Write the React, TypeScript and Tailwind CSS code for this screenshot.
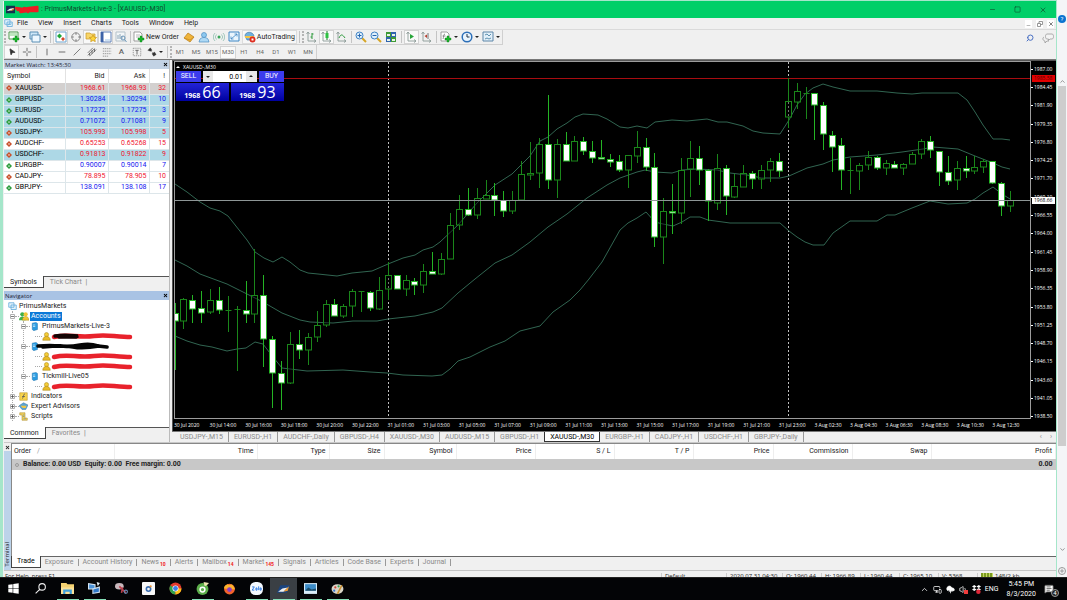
import React from 'react';
import {
  ChevronDown,
  ChevronUp,
  CloudUpload,
  Crosshair,
  Minus,
  MessageSquareText,
  MonitorSmartphone,
  MousePointer2,
  Plus,
  Search,
  Square,
  Volume1,
  X,
} from 'lucide-react';

interface Quote {
  symbol: string;
  bid: string;
  ask: string;
  spread: number;
  up: boolean;
  row: string;
}

const SEL = 'bg-[#add8e6]';
const QUOTES: Quote[] = [
  { symbol: 'XAUUSD-', bid: '1968.61', ask: '1968.93', spread: 32, up: false, row: 'bg-[#d3d0cf]' },
  { symbol: 'GBPUSD-', bid: '1.30284', ask: '1.30294', spread: 10, up: true, row: SEL },
  { symbol: 'EURUSD-', bid: '1.17272', ask: '1.17275', spread: 3, up: true, row: SEL },
  { symbol: 'AUDUSD-', bid: '0.71072', ask: '0.71081', spread: 9, up: true, row: SEL },
  { symbol: 'USDJPY-', bid: '105.993', ask: '105.998', spread: 5, up: false, row: SEL },
  { symbol: 'AUDCHF-', bid: '0.65253', ask: '0.65268', spread: 15, up: false, row: 'bg-white' },
  { symbol: 'USDCHF-', bid: '0.91813', ask: '0.91822', spread: 9, up: false, row: SEL },
  { symbol: 'EURGBP-', bid: '0.90007', ask: '0.90014', spread: 7, up: true, row: 'bg-white' },
  { symbol: 'CADJPY-', bid: '78.895', ask: '78.905', spread: 10, up: false, row: 'bg-white' },
  { symbol: 'GBPJPY-', bid: '138.091', ask: '138.108', spread: 17, up: true, row: 'bg-white' },
];

const MENU = ['File', 'View', 'Insert', 'Charts', 'Tools', 'Window', 'Help'];
const PERIODS = ['M1', 'M5', 'M15', 'M30', 'H1', 'H4', 'D1', 'W1', 'MN'];
const CHART_TABS = [
  'USDJPY-,M15', 'EURUSD-,H1', 'AUDCHF-,Daily', 'GBPUSD-,H4', 'XAUUSD-,M30', 'AUDUSD-,M15',
  'GBPUSD-,H1', 'XAUUSD-,M30', 'EURGBP-,H1', 'CADJPY-,H1', 'USDCHF-,H1', 'GBPJPY-,Daily',
];
const ACTIVE_CHART = 7;
const PRICES = [
  '1987.00', '1984.45', '1981.90', '1979.35', '1976.80', '1974.25', '1971.70', '1969.10', '1966.55', '1964.00',
  '1961.45', '1958.90', '1956.35', '1953.80', '1951.25', '1948.70', '1946.15', '1943.60', '1941.05', '1938.50',
];
const TIMES = [
  '30 Jul 2020', '30 Jul 14:00', '30 Jul 16:00', '30 Jul 18:00', '30 Jul 20:00', '30 Jul 22:00',
  '31 Jul 01:00', '31 Jul 03:00', '31 Jul 05:00', '31 Jul 07:00', '31 Jul 09:00', '31 Jul 11:00',
  '31 Jul 13:00', '31 Jul 15:00', '31 Jul 17:00', '31 Jul 19:00', '31 Jul 21:00', '31 Jul 23:00',
  '3 Aug 02:30', '3 Aug 04:30', '3 Aug 06:30', '3 Aug 08:30', '3 Aug 10:30', '3 Aug 12:30',
];
const TERMINAL_TABS: { name: string; count?: number }[] = [
  { name: 'Trade' }, { name: 'Exposure' }, { name: 'Account History' }, { name: 'News', count: 10 },
  { name: 'Alerts' }, { name: 'Mailbox', count: 14 }, { name: 'Market', count: 145 }, { name: 'Signals' },
  { name: 'Articles' }, { name: 'Code Base' }, { name: 'Experts' }, { name: 'Journal' },
];
const ORDER_COLS = ['Time', 'Type', 'Size', 'Symbol', 'Price', 'S / L', 'T / P', 'Price', 'Commission', 'Swap', 'Profit'];

// high, body top, body bottom, low, 1 = bearish (filled)
const CANDLES: number[][] = [
  [303, 313, 321, 370, 1], [298, 299, 321, 329, 0], [295, 300, 309, 323, 1], [291, 308, 313, 323, 1],
  [289, 300, 312, 314, 0], [287, 300, 310, 314, 1], [296, 310, 310, 332, 0], [306, 309, 309, 371, 0],
  [281, 310, 314, 323, 1], [249, 295, 314, 323, 0], [275, 295, 339, 367, 1], [336, 339, 373, 408, 1],
  [361, 373, 383, 410, 1], [332, 344, 383, 384, 0], [330, 344, 350, 359, 1], [333, 337, 350, 365, 0],
  [311, 325, 337, 342, 0], [300, 304, 325, 327, 0], [299, 304, 316, 316, 1], [304, 306, 316, 318, 0],
  [289, 291, 306, 317, 0], [291, 291, 291, 312, 0], [291, 292, 308, 311, 1], [277, 290, 309, 310, 0],
  [262, 275, 289, 300, 0], [275, 275, 289, 289, 1], [275, 280, 289, 296, 0], [278, 281, 285, 295, 1],
  [264, 271, 285, 293, 0], [252, 271, 274, 274, 1], [253, 259, 274, 275, 0], [213, 225, 259, 259, 0],
  [195, 209, 225, 230, 0], [188, 209, 215, 216, 1], [188, 198, 215, 219, 0], [180, 195, 199, 199, 0],
  [183, 195, 200, 216, 1], [191, 200, 211, 217, 1], [191, 200, 211, 214, 0], [161, 174, 200, 200, 0],
  [142, 173, 175, 180, 0], [138, 144, 173, 188, 0], [95, 144, 180, 189, 1], [139, 144, 180, 198, 0],
  [132, 144, 161, 161, 1], [136, 141, 161, 161, 0], [137, 141, 151, 155, 1], [141, 151, 158, 163, 1],
  [140, 157, 159, 159, 1], [154, 159, 162, 167, 1], [155, 161, 170, 172, 1], [155, 155, 170, 188, 0],
  [131, 147, 156, 163, 0], [138, 147, 167, 171, 1], [153, 167, 237, 247, 1], [198, 211, 237, 264, 0],
  [184, 211, 213, 234, 1], [158, 170, 213, 224, 0], [141, 158, 169, 197, 0], [146, 158, 170, 185, 1],
  [169, 170, 201, 221, 1], [154, 168, 203, 210, 0], [165, 168, 196, 215, 1], [174, 186, 197, 198, 0],
  [165, 173, 187, 187, 0], [171, 173, 179, 189, 1], [165, 170, 179, 189, 0], [158, 161, 170, 182, 0],
  [153, 161, 171, 177, 1], [78, 101, 117, 128, 0], [83, 91, 102, 109, 0], [87, 93, 93, 119, 0],
  [93, 93, 105, 140, 1], [102, 105, 134, 150, 1], [131, 135, 147, 172, 1], [138, 145, 170, 190, 1],
  [158, 170, 170, 194, 0], [163, 165, 171, 190, 0], [151, 157, 165, 170, 0], [156, 157, 168, 170, 1],
  [160, 163, 168, 175, 0], [161, 164, 168, 168, 1], [163, 164, 168, 175, 0], [152, 154, 164, 164, 0],
  [139, 141, 154, 159, 0], [136, 141, 150, 158, 1], [151, 151, 172, 186, 1], [156, 172, 181, 185, 1],
  [161, 168, 180, 190, 0], [156, 168, 171, 178, 1], [156, 167, 171, 174, 0], [159, 161, 167, 173, 0],
  [161, 161, 183, 184, 1], [182, 183, 206, 216, 1], [191, 200, 206, 212, 0],
];

const BANDS = [
  '175,184 187,192 200,202 210,208 220,211 228,216 247,240 255,252 264,258 273,262 282,257 290,262 300,270 308,273 318,274 337,276 352,273 372,271 388,264 403,258 415,255 423,250 433,247 440,242 458,225 477,203 495,185 512,174 530,156 540,141 548,137 557,129 567,123 575,117 583,114 598,115 607,119 620,127 628,128 637,126 647,128 655,122 672,120 687,121 707,119 718,122 727,122 743,126 753,131 763,133 780,134 789,120 797,105 805,94 813,88 823,84 833,87 850,91 877,91 897,93 912,94 922,93 958,93 967,100 975,112 983,125 993,139 1002,139 1010,140',
  '175,260 187,266 200,274 227,284 253,297 263,302 282,313 300,320 310,322 333,323 353,321 377,321 388,319 415,316 433,312 442,308 458,293 475,279 495,263 512,255 530,242 548,227 567,214 587,198 607,185 620,178 637,172 645,170 655,172 672,173 682,170 697,169 717,170 730,173 747,175 762,178 780,178 789,176 807,168 823,164 833,160 850,157 877,155 902,152 923,149 933,147 958,149 975,156 993,163 1002,167 1010,169',
  '175,336 187,341 200,345 212,347 227,351 237,349 246,348 255,342 263,344 273,357 282,368 290,369 307,371 343,370 370,372 387,373 403,375 432,376 442,375 450,369 458,361 470,357 490,347 505,341 520,331 540,326 553,312 570,300 580,290 589,279 602,262 620,230 628,223 637,218 646,212 655,222 663,224 673,226 682,222 690,217 700,217 708,220 730,223 780,223 789,231 797,237 805,242 813,245 824,245 833,233 850,221 877,221 887,215 895,215 912,208 930,201 948,204 967,203 975,199 983,193 993,187 1002,194 1010,199',
];

const Ico: React.FC<{ children: React.ReactNode; className?: string }> = ({ children, className = 'size-3' }) => (
  <svg viewBox="0 0 12 12" className={`${className} shrink-0`} fill="none">
    {children}
  </svg>
);

const Caret = () => (
  <svg viewBox="0 0 4 2" className="h-[2px] w-1 shrink-0">
    <path d="M0 0h4L2 2z" fill="#222" />
  </svg>
);

const Sep = () => <span className="mx-[2px] h-3 w-px shrink-0 bg-[#c4c4c4]" />;
const Grip = () => <span className="h-3 w-[2px] shrink-0 border-l-2 border-dotted border-[#b4b4b4]" />;

const Tool: React.FC<{ label: string; on?: boolean; wide?: boolean; children: React.ReactNode }> = ({ label, on, wide, children }) => (
  <button
    aria-label={label}
    className={`flex h-[14px] shrink-0 items-center justify-center gap-[2px] ${wide ? 'w-[21px]' : 'w-[15px]'} ${
      on ? 'border border-[#d4d4d4] bg-[#f9f9f9]' : ''
    }`}
  >
    {children}
  </button>
);

const GreenPlus = ({ x, y }: { x: number; y: number }) => (
  <path d={`M${x} ${y}h2v2h2v2h-2v2h-2v-2h-2v-2h2z`} fill="#19b52a" stroke="#0c7d1a" strokeWidth=".4" />
);

const TitleBar = () => (
  <header className="flex h-[17px] shrink-0 items-center bg-[#00cf68] pl-[2px] text-[#124a2c]">
    <Ico className="size-[9px]">
      <path d="M0 1h12v10H0z" fill="#14304f" />
      <path d="M1 8l4-3 6-1-3 3z" fill="#fff" />
      <path d="M5 8l6-4-1 3z" fill="#f0912a" />
    </Ico>
    <svg viewBox="0 0 28 9" className="h-[9px] w-[26px] shrink-0">
      <path d="M1 3l8 1 6-1 9-1M3 5l9 0 12-1M6 7l8-1 10 0M8 4l14 1M10 3l4 4 6-4" stroke="#ee1c24" strokeWidth="3" fill="none" strokeLinecap="round" />
    </svg>
    <h1 className="truncate text-[7px]">: PrimusMarkets-Live-3 - [XAUUSD-,M30]</h1>
    <div className="ml-auto flex gap-[18px] pr-[9px]">
      <button aria-label="Minimize"><Minus size={7} /></button>
      <button aria-label="Maximize"><Square size={7} /></button>
      <button aria-label="Close"><X size={8} /></button>
    </div>
  </header>
);

const MenuBar = () => (
  <nav className="flex h-[12px] shrink-0 items-center border-b border-[#dadada] text-[7px] leading-none">
    <Ico className="size-[9px]">
      <path d="M1 1h7v6H1zM4 4h7v6H4z" fill="#e4f3fc" stroke="#5aa7d8" />
      <path d="M5 9l2-3 1 2 2-2" stroke="#5aa7d8" strokeWidth=".8" />
    </Ico>
    <div className="flex gap-[10px] pl-[4px]">
      {MENU.map((m) => (
        <button key={m}>{m}</button>
      ))}
    </div>
    <div className="ml-auto flex gap-1 pr-[2px] text-[#555]">
      <button aria-label="Minimize chart" className="flex h-2 w-[7px] items-end justify-center bg-white"><Minus size={5} /></button>
      <button aria-label="Restore chart" className="flex h-2 w-[7px] items-center justify-center bg-white">
        <Ico className="size-[6px]"><path d="M1 5h6v6H1zM4 5V1h7v6H7" stroke="#777" strokeWidth="1.500" /></Ico>
      </button>
      <button aria-label="Close chart" className="flex h-2 w-[7px] items-center justify-center bg-white"><X size={6} strokeWidth={3} /></button>
    </div>
  </nav>
);

const axes = <path d="M3 1v9h8M1.500 3L3 1l1.500 2M9 8.500l2 1.500-2 1.500" stroke="#8b9a96" strokeWidth=".9" />;

const MainToolbar = () => (
  <div className="flex h-[15px] shrink-0 items-center text-[7px] leading-none">
    <div className="flex items-center border-r border-b border-[#d0d0d0]">
      <Grip />
      <Tool label="New chart" wide>
        <Ico><path d="M1 1h9v7H1z" fill="#fff" stroke="#4c9a4e" /><path d="M2 2h7v3H2z" fill="#bfe6bf" /><GreenPlus x={7} y={5} /></Ico>
        <Caret />
      </Tool>
      <Tool label="Profiles" wide>
        <Ico><path d="M1 1h8v7H1z" fill="#cde6f7" stroke="#5b8fb5" /><path d="M3 4h8v7H3z" fill="#eef8ff" stroke="#5b8fb5" /></Ico>
        <Caret />
      </Tool>
      <Sep />
      <Tool label="Market Watch" on>
        <Ico><path d="M1 1h10v10H1z" fill="#fff" stroke="#6fa5cf" /><path d="M2 5l2.500-2.500L7 5 4.500 7.500z" fill="#20a83a" /><path d="M6 8l2-2 2 2-2 2z" fill="#d5482a" /></Ico>
      </Tool>
      <Tool label="Data Window"><Crosshair size={10} strokeWidth={2} color="#777" /></Tool>
      <Tool label="Navigator" on>
        <Ico><path d="M1 2h4l1 1h4v5H1z" fill="#f8d568" stroke="#c79a26" strokeWidth=".7" /><path d="M8 4l1.200 2.200 2.400.3-1.700 1.700.4 2.500L8 9.500l-2.300 1.200.4-2.500L4.400 6.500l2.400-.3z" fill="#fbd33c" stroke="#c08a10" strokeWidth=".6" /></Ico>
      </Tool>
      <Tool label="Terminal" on>
        <Ico><path d="M1 1h10v10H1z" fill="#fff" stroke="#5c7eb8" /><path d="M1 1h2.500v10H1z" fill="#3c62a8" /><path d="M5 9h5" stroke="#9cc2e8" /></Ico>
      </Tool>
      <Tool label="Strategy Tester">
        <Ico><path d="M1 1h9v9H1z" fill="#f3f6f8" stroke="#b5c2ca" /><path d="M3 8V4m2 4V3m2 5V5" stroke="#8da6b8" /><circle cx="8" cy="7" r="2" stroke="#6c96b8" /><path d="M9.500 8.500l2 2.500" stroke="#6c96b8" /></Ico>
      </Tool>
      <Sep />
      <button className="flex h-[14px] shrink-0 items-center gap-px whitespace-nowrap">
        <Ico><path d="M1 1h6l2 2v7H1z" fill="#fff" stroke="#888" strokeWidth=".8" /><path d="M3 4h4M3 6h3" stroke="#999" strokeWidth=".7" /><GreenPlus x={7} y={5} /></Ico>
        New Order
      </button>
      <span className="w-[3px]" />
      <Tool label="MetaEditor"><Ico><path d="M1 7l4-5 6 4-4 5z" fill="#f0b53c" stroke="#b77a12" strokeWidth=".7" /><path d="M1 7l6 2 4-3" stroke="#c98a1c" strokeWidth=".7" /></Ico></Tool>
      <Tool label="Market"><Ico><circle cx="6" cy="4" r="2.500" fill="#8ec9f0" stroke="#4a8dc0" strokeWidth=".7" /><path d="M2 8c2-2 6-2 8 0l1 3H1z" fill="#aed9f5" stroke="#4a8dc0" strokeWidth=".7" /></Ico></Tool>
      <Tool label="Signals"><Ico><circle cx="6" cy="6" r="1.500" fill="#3aa65a" /><path d="M3.500 3.500a3.500 3.500 0 000 5M8.500 3.500a3.500 3.500 0 010 5M2 2a5.600 5.600 0 000 8M10 2a5.600 5.600 0 010 8" stroke="#8fbfb0" strokeWidth=".8" /></Ico></Tool>
      <Tool label="Full screen"><Ico><path d="M1 1h10v9H1z" fill="#eaf5fd" stroke="#3f87c4" /><path d="M6.500 3H9v2.500M5.500 8H3V5.500M9 3L3 8" stroke="#3f87c4" strokeWidth=".8" /></Ico></Tool>
      <button className="flex h-[14px] shrink-0 items-center gap-px border border-[#dcdcdc] bg-[#f7f7f7] px-px whitespace-nowrap">
        <Ico><path d="M1 5c0-5 8-5 9 0L8 9H3z" fill="#6fb0de" stroke="#35719e" strokeWidth=".6" /><path d="M1 5h9v2H1z" fill="#f2c443" /><circle cx="8.500" cy="8.500" r="3" fill="#dd2c1e" /><path d="M7.500 7.500h2v2h-2z" fill="#fff" /></Ico>
        AutoTrading
      </button>
      <Sep />
      <Grip />
      <Tool label="Bar chart"><Ico>{axes}<path d="M7 2v6M5.500 6H7M7 3h1.500" stroke="#2f9a3d" /></Ico></Tool>
      <Tool label="Candlesticks" on><Ico>{axes}<path d="M7 0v9" stroke="#167a24" /><path d="M5.500 2h3v5h-3z" fill="#2fc143" /></Ico></Tool>
      <Tool label="Line chart"><Ico>{axes}<path d="M4 7c2-5 4-3 6 0" stroke="#2f9a3d" /></Ico></Tool>
      <Sep />
      <Tool label="Zoom in"><Ico><path d="M7 7l4 4" stroke="#d6a526" strokeWidth="2" /><circle cx="4.500" cy="4.500" r="3.500" fill="#dff0fc" stroke="#3e82c4" /><path d="M2.500 4.500h4M4.500 2.500v4" stroke="#2766b0" /></Ico></Tool>
      <Tool label="Zoom out"><Ico><path d="M7 7l4 4" stroke="#d6a526" strokeWidth="2" /><circle cx="4.500" cy="4.500" r="3.500" fill="#dff0fc" stroke="#3e82c4" /><path d="M2.500 4.500h4" stroke="#2766b0" /></Ico></Tool>
      <Tool label="Tile windows"><Ico><path d="M1 1h5v5H1z" fill="#3e9a36" /><path d="M6 1h5v5H6z" fill="#2f63ae" /><path d="M1 6h5v5H1z" fill="#2f63ae" /><path d="M6 6h5v5H6z" fill="#3e9a36" /><path d="M2 3h3v2H2zM7 3h3v2H7zM2 8h3v2H2zM7 8h3v2H7z" fill="#e8f4e6" /></Ico></Tool>
      <Sep />
      <Tool label="Auto scroll" on><Ico>{axes}<path d="M5 3l4 2.500L5 8z" fill="#28a53a" /></Ico></Tool>
      <Tool label="Chart shift"><Ico>{axes}<path d="M8 2v6" stroke="#777" /><path d="M7 3.500L4.500 5 7 7z" fill="#b84030" /></Ico></Tool>
      <Sep />
      <Tool label="Indicators" wide><Ico><path d="M1 1h6l2 2v7H1z" fill="#fff" stroke="#888" strokeWidth=".8" /><path d="M5 3c-2 0-1 3-2 5M2.500 5h3" stroke="#777" strokeWidth=".8" /><GreenPlus x={7} y={5} /></Ico><Caret /></Tool>
      <Tool label="Periods" wide><Ico><circle cx="6" cy="6" r="4.800" fill="#e9f4fd" stroke="#2c6fb8" strokeWidth="1.500" /><path d="M6 3v3h2.500" stroke="#234" /></Ico><Caret /></Tool>
      <Tool label="Templates" wide><Ico><path d="M1 1h10v9H1z" fill="#e3f0f9" stroke="#5c86a8" /><path d="M3 4l2-1 2 2 2-2M3 8l2-1 2 1 2-1" stroke="#4f87a8" strokeWidth=".9" /></Ico><Caret /></Tool>
    </div>
    <div className="ml-auto flex items-center gap-2 pr-[2px]">
      <button aria-label="Search"><Search size={8} strokeWidth={3} color="#4a70c4" className="-scale-x-100" /></button>
      <button aria-label="Chat">
        <Ico><path d="M5 2h5c2 0 2 5 0 5H8L6.500 8.500V7H5C3 7 3 2 5 2z" fill="#f4f4f4" stroke="#999" strokeWidth=".8" /><path d="M2 5c-2 1-1 4 1 4v2l2-2h2" stroke="#999" strokeWidth=".8" /></Ico>
      </button>
    </div>
  </div>
);

const DrawToolbar = () => (
  <div className="flex h-[14px] shrink-0 items-center text-[6px] leading-none text-[#666]">
    <div className="flex items-center border-r border-[#d0d0d0]">
      <Tool label="Cursor" on><MousePointer2 size={8} fill="#333" color="#333" className="rotate-12" /></Tool>
      <Tool label="Crosshair"><Ico className="size-[10px]"><path d="M6 1v4M6 7v4M1 6h4M7 6h4" stroke="#555" /></Ico></Tool>
      <Sep />
      <Tool label="Vertical line"><Ico className="size-[10px]"><path d="M6 2v8" stroke="#555" /></Ico></Tool>
      <Tool label="Horizontal line"><Ico className="size-[10px]"><path d="M2 6h8" stroke="#555" /></Ico></Tool>
      <Tool label="Trendline"><Ico className="size-[10px]"><path d="M2 10l8-8" stroke="#666" /></Ico></Tool>
      <Tool label="Channel"><Ico className="size-[10px]"><path d="M1 10l8-8M3 11l8-8M1 7l6-6M3 7v3M6 4v4M9 2v4" stroke="#555" strokeWidth=".9" /></Ico></Tool>
      <Tool label="Fibonacci"><Ico className="size-[10px]"><path d="M1 2h10M1 5h10M1 8h10M1 11h7" stroke="#888" strokeDasharray="1.500 .8" /></Ico></Tool>
      <Tool label="Text"><span className="text-[8px] font-medium">A</span></Tool>
      <Tool label="Text label"><Ico className="size-[10px]"><path d="M1.500 1.500h9v9h-9z" stroke="#888" strokeDasharray="1.500 1" /><path d="M4 4h4M6 4v5" stroke="#555" /></Ico></Tool>
      <Tool label="Arrows" wide><Ico className="size-[10px]"><path d="M1 4l3-3 2 3-2 1zM6 8l3-2 2 3-3 2zM5 5l3 3" fill="#333" stroke="#333" strokeWidth=".4" /></Ico><Caret /></Tool>
      <Sep />
      <Grip />
      {PERIODS.map((p) => (
        <button key={p} className={`h-[13px] w-4 ${p === 'M30' ? 'border border-[#d4d4d4] bg-[#f9f9f9]' : ''}`}>{p}</button>
      ))}
    </div>
  </div>
);

const PanelTitle = ({ title, className }: { title: string; className: string }) => (
  <div className={`flex h-[9px] shrink-0 items-center justify-between px-px font-['Open_Sans',sans-serif] text-[6px] leading-none text-[#223] ${className}`}>
    <h2>{title}</h2>
    <button aria-label={`Close ${title}`}><X size={5} strokeWidth={5} color="#000" /></button>
  </div>
);

const PanelTabs = ({ tabs }: { tabs: string[] }) => (
  <div role="tablist" className="flex h-[12px] shrink-0 text-[7px] leading-none">
    <button role="tab" aria-selected className="border-r border-b border-[#444] bg-white px-[6px] pt-px">{tabs[0]}</button>
    <button role="tab" aria-selected={false} className="flex-1 border-t border-[#555] pl-[6px] text-left text-[#8a8a8a]">
      {tabs[1]} <span className="pl-[2px] text-[#777]">|</span>
    </button>
  </div>
);

const MarketWatch = () => (
  <section className="flex h-[228px] flex-col">
    <PanelTitle title="Market Watch: 13:45:30" className="bg-[#c2d2e4]" />
    <div className="flex-1 bg-white">
      <table className="w-full table-fixed text-[7px] leading-none">
        <colgroup>
          <col />
          <col className="w-[43px]" />
          <col className="w-[41px]" />
          <col className="w-[20px]" />
        </colgroup>
        <thead>
          <tr className="h-[14px] text-right">
            <th className="border-r border-[#e2e2e2] pl-[3px] text-left font-normal">Symbol</th>
            <th className="border-r border-[#e2e2e2] pr-[3px] font-normal">Bid</th>
            <th className="border-r border-[#e2e2e2] pr-[3px] font-normal">Ask</th>
            <th className="pr-1 font-normal">!</th>
          </tr>
        </thead>
        <tbody>
          {QUOTES.map((q) => (
            <tr key={q.symbol} className={`h-[11px] border-b border-[#dde6ea] text-right ${q.row} ${q.up ? 'text-[#1414f0]' : 'text-[#f01430]'}`}>
              <td className="border-r border-[#dde6ea] text-black">
                <span className="flex items-center gap-[3px] pl-[2px]">
                  <Ico className="size-[6px]">
                    <path d="M6 0l6 6-6 6-6-6z" fill={q.up ? '#2c9c3c' : '#c8502c'} />
                    <path d={q.up ? 'M4 7l2-3 2 3z' : 'M4 5l2 3 2-3z'} fill="#fff" />
                  </Ico>
                  {q.symbol}
                </span>
              </td>
              <td className="border-r border-[#dde6ea] pr-[2px]">{q.bid}</td>
              <td className="border-r border-[#dde6ea] pr-[2px]">{q.ask}</td>
              <td className="pr-[3px]">{q.spread}</td>
            </tr>
          ))}
        </tbody>
      </table>
    </div>
    <PanelTabs tabs={['Symbols', 'Tick Chart']} />
  </section>
);

const Expander = ({ open }: { open?: boolean }) => (
  <svg viewBox="0 0 5 5" className="size-[5px] shrink-0">
    <path d="M.5.5h4v4h-4z" fill="#fff" stroke="#b0b0b0" />
    <path d={open ? 'M1 2.500h3' : 'M1 2.500h3M2.500 1v3'} stroke="#444" strokeWidth=".7" />
  </svg>
);

const ServerIcon = () => (
  <Ico className="size-[9px]">
    <path d="M3 1.500l5-1 2 1.500v8l-5 1.500-2-1.500z" fill="#2b9be0" stroke="#1a6ea8" strokeWidth=".6" />
    <path d="M4 4h3M4 6h3" stroke="#c9ecff" />
  </Ico>
);

const UserIcon = () => (
  <Ico className="size-[9px]">
    <circle cx="6" cy="3.500" r="2.800" fill="#f4cd3a" stroke="#a88312" strokeWidth=".7" />
    <path d="M1 11c0-7 10-7 10 0z" fill="#e8bb26" stroke="#a88312" strokeWidth=".7" />
  </Ico>
);

const Scribble = ({ black }: { black?: boolean }) => (
  <svg viewBox="0 0 82 8" className="h-2 w-[82px] shrink-0">
    <path d="M3 5q8-2 20-1t20 0 20 0 16 1" stroke="#e8222c" strokeWidth="4.500" fill="none" strokeLinecap="round" />
    {black && <path d="M4 4q8-1 14-.5T27 4l-2 1H8" stroke="#150404" strokeWidth="3.500" fill="none" strokeLinecap="round" />}
  </svg>
);

const Leaf = ({ black }: { black?: boolean }) => (
  <li className="flex h-[10px] items-center">
    <span className="w-[7px] border-t border-dotted border-[#aaa]" />
    <UserIcon />
    <Scribble black={black} />
  </li>
);

const TreeRow: React.FC<{ open?: boolean; icon: React.ReactNode; children: React.ReactNode }> = ({ open, icon, children }) => (
  <div className="-ml-[3px] flex h-[10px] items-center">
    <Expander open={open} />
    <span className="w-[4px] border-t border-dotted border-[#aaa]" />
    {icon}
    {children}
  </div>
);

const Navigator = () => (
  <section className="mt-[3px] flex min-h-0 flex-1 flex-col">
    <PanelTitle title="Navigator" className="bg-[#a9c3e4]" />
    <div className="flex-1 bg-white pt-px text-[7px] leading-none">
      <div className="flex h-[10px] items-center gap-[2px] pl-1">
        <Ico className="size-[9px]"><path d="M1 1h7v6H1zM4 4h7v6H4z" fill="#e4f3fc" stroke="#5aa7d8" /></Ico>
        PrimusMarkets
      </div>
      <ul className="ml-2 border-l border-dotted border-[#aaa]">
        <li>
          <TreeRow open icon={<Ico className="size-[10px]"><circle cx="4" cy="4" r="2.500" fill="#3fae4a" /><path d="M0 11c0-6 8-6 8 0z" fill="#3fae4a" /><circle cx="8" cy="4" r="2.500" fill="#f0c534" /><path d="M4 11c0-6 8-6 8 0z" fill="#f0c534" stroke="#a88312" strokeWidth=".5" /></Ico>}>
            <span className="ml-px bg-[#0a78d7] px-px py-px text-white">Accounts</span>
          </TreeRow>
          <ul className="ml-[10px] border-l border-dotted border-[#aaa]">
            <li>
              <TreeRow open icon={<ServerIcon />}><span className="pl-[3px]">PrimusMarkets-Live-3</span></TreeRow>
              <ul className="ml-[11px]"><Leaf black /></ul>
            </li>
            <li>
              <TreeRow open icon={<ServerIcon />}>
                <svg viewBox="0 0 74 8" className="-ml-1 h-2 w-[74px]">
                  <path d="M3 4q12-1 22 0t20-1 18 1l9 1M8 5q20-2 30 0t26-1" stroke="#050505" strokeWidth="3.600" fill="none" strokeLinecap="round" />
                </svg>
              </TreeRow>
              <ul className="ml-[11px]"><Leaf /><Leaf /></ul>
            </li>
            <li>
              <TreeRow open icon={<ServerIcon />}><span className="pl-[3px]">Tickmill-Live05</span></TreeRow>
              <ul className="ml-[11px]"><Leaf /></ul>
            </li>
          </ul>
        </li>
        <li>
          <TreeRow icon={<Ico className="size-[9px]"><path d="M1 1h10v10H1z" fill="#f7d34c" stroke="#b58e1c" strokeWidth=".7" /><path d="M8 3c-3-1-1 4-4 6M4 6h4" stroke="#555" /></Ico>}>
            <span className="pl-[3px]">Indicators</span>
          </TreeRow>
        </li>
        <li>
          <TreeRow icon={<Ico className="size-[9px]"><path d="M0 5l6-4 6 3-3 6H4z" fill="#5aa3d4" stroke="#2d6d9b" strokeWidth=".6" /><path d="M2 5h8l-1 3H5z" fill="#f0c544" /></Ico>}>
            <span className="pl-[3px]">Expert Advisors</span>
          </TreeRow>
        </li>
        <li>
          <TreeRow icon={<Ico className="size-[9px]"><path d="M1 1h7v7h3v3H4V4H1z" fill="#f3cf5c" stroke="#a98a2c" strokeWidth=".7" /><path d="M5 4h2M5 6h2M6 9h3" stroke="#4a87b4" strokeWidth=".8" /></Ico>}>
            <span className="pl-[3px]">Scripts</span>
          </TreeRow>
        </li>
      </ul>
    </div>
    <PanelTabs tabs={['Common', 'Favorites']} />
    <span className="h-[3px] shrink-0" />
  </section>
);

const PriceBox = ({ label, big, side }: { label: string; big: string; side: string }) => (
  <button aria-label={side} className="flex h-[18px] flex-1 items-end justify-center gap-[2px] bg-linear-to-b from-[#2222d8] to-[#0000a0] pb-px leading-none text-white">
    <span className="pb-px text-[7px] font-bold">{label}</span>
    <span className="text-[16px] leading-[15px]">{big}</span>
  </button>
);

const OneClick = () => (
  <div className="absolute top-px left-px w-[108px] text-white">
    <p className="flex h-[8px] items-center gap-[3px] text-[5px] leading-none">
      <svg viewBox="0 0 4 2" className="h-[2px] w-1"><path d="M0 2h4L2 0z" fill="#fff" /></svg>
      XAUUSD-,M30
    </p>
    <div className="flex h-[11px] font-['Roboto',sans-serif] text-[7px] leading-none">
      <button className="w-[25px] bg-[#3c3cec]">SELL</button>
      <div className="mx-[2px] flex flex-1 bg-white text-black">
        <button aria-label="Decrease volume" className="flex w-[10px] items-center justify-center bg-[#e8e8e8]"><Caret /></button>
        <input aria-label="Volume" defaultValue="0.01" className="w-0 min-w-0 flex-1 pr-[3px] text-right text-[7px]" />
        <button aria-label="Increase volume" className="flex w-[11px] rotate-180 items-center justify-center bg-[#e8e8e8]"><Caret /></button>
      </div>
      <button className="w-[25px] bg-[#3c3cec]">BUY</button>
    </div>
    <div className="mt-px flex gap-[2px]">
      <PriceBox side="Sell price" label="1968" big="66" />
      <PriceBox side="Buy price" label="1968" big="93" />
    </div>
  </div>
);

const Plot = () => (
  <svg viewBox="175 62 855 356" preserveAspectRatio="none" className="absolute inset-0 size-full">
    <path d="M388.500 62V418M788.500 62V418" stroke="#c0c0c0" strokeDasharray="2 2" />
    <path d="M175 78.500H1030" stroke="#a80c10" />
    {BANDS.map((b) => (
      <polyline key={b.slice(0, 7)} points={b} fill="none" stroke="#37705a" strokeWidth="0.9" />
    ))}
    {CANDLES.map(([high, top, bottom, low, bear], i) => {
      const x = Math.floor(175 + 8.888 * i) + 0.5;
      if (top === bottom) {
        return <path key={i} d={`M${x} ${high}V${low}M${x - 3} ${top + 0.5}h6`} stroke="#1a861a" fill="none" />;
      }
      return (
        <g key={i} stroke={bear ? '#24b424' : '#1a861a'}>
          <path d={`M${x} ${high}V${top}M${x} ${bottom}V${low}`} />
          <rect x={x - 3} y={top + 0.5} width={6} height={Math.max(bottom - top - 0.5, 1)} fill={bear ? '#fff' : '#000'} fillOpacity={bear ? 1 : 0.4} />
        </g>
      );
    })}
    <path d="M175 200.500H1030" stroke="#8e9696" />
  </svg>
);

const Chart = () => (
  <section className="flex min-h-0 flex-1 flex-col border-t border-l border-[#555] bg-black pl-px font-['Open_Sans',sans-serif] text-white">
    <div className="flex min-h-0 flex-1">
      <div className="relative flex-1 border border-[#9c9c9c]">
        <Plot />
        <OneClick />
      </div>
      <div className="relative w-[25px] text-[5px] leading-none">
        <ol className="-mt-px -mb-[9px] flex h-[366px] flex-col">
          {PRICES.map((p) => (
            <li key={p} className="flex flex-1 items-center gap-px"><span className="h-px w-[2px] bg-white" />{p}</li>
          ))}
        </ol>
        <span className="absolute top-[14px] right-px left-px bg-[#e00000] py-px pl-[2px] text-[#500]">1985.58</span>
        <span className="absolute top-[136px] right-px left-px bg-white py-px pl-[2px] text-black">1968.66</span>
      </div>
    </div>
    <div className="flex h-[12px] items-center pr-[28px] text-[5px] leading-none">
      {TIMES.map((t) => (
        <span key={t} className="min-w-0 flex-1 whitespace-nowrap">{t}</span>
      ))}
    </div>
  </section>
);

const ChartTabs = () => (
  <div role="tablist" className="flex h-[11px] shrink-0 items-stretch border-t border-[#777] pl-[3px] text-[7px] leading-none text-[#8a8a8a]">
    {CHART_TABS.map((t, i) => (
      <button
        key={i}
        role="tab"
        aria-selected={i === ACTIVE_CHART}
        className={`px-[5px] ${i === ACTIVE_CHART ? 'border border-t-0 border-[#333] bg-white pt-px text-black' : i === ACTIVE_CHART - 1 ? '' : 'border-r border-[#999]'}`}
      >
        {t}
      </button>
    ))}
    <div className="ml-auto flex items-center gap-2 pr-1">
      <button aria-label="Previous charts">‹</button>
      <button aria-label="Next charts">›</button>
    </div>
  </div>
);

const Terminal = () => (
  <section className="flex h-[128px] shrink-0 border-t border-[#c8c8c8]">
    <div className="flex w-[7px] shrink-0 flex-col items-center justify-between bg-[#bcd3ea] pb-[2px]">
      <button aria-label="Close Terminal" className="flex h-2 w-full items-center justify-center bg-[#f0f0f0]"><X size={5} strokeWidth={5} /></button>
      <h2 className="rotate-180 pt-px font-['Open_Sans',sans-serif] text-[6px] leading-[7px] [writing-mode:vertical-rl]">Terminal</h2>
    </div>
    <div className="flex min-w-0 flex-1 flex-col pb-[2px]">
      <div className="flex-1 border-t border-l border-[#888] bg-white">
        <table className="w-full table-fixed text-[7px] leading-none">
          <colgroup>
            <col className="w-[102px]" />
            <col className="w-[143px]" />
            <col className="w-[72px]" />
            <col className="w-[55px]" />
            <col className="w-[72px]" />
            <col className="w-[79px]" />
            <col className="w-[79px]" />
            <col className="w-[79px]" />
            <col className="w-[80px]" />
            <col className="w-[79px]" />
            <col className="w-[79px]" />
            <col />
          </colgroup>
          <thead>
            <tr className="h-[15px]">
              <th className="border-r border-[#eee] pl-[2px] text-left font-normal">Order <span className="pl-1 text-[#999]">/</span></th>
              {ORDER_COLS.map((c, i) => (
                <th key={i} className="border-r border-[#eee] pr-[3px] text-right font-normal">{c}</th>
              ))}
            </tr>
          </thead>
          <tbody>
            <tr className="h-[11px] bg-[#c8c8c8] font-bold">
              <td colSpan={11}>
                <span className="flex items-center gap-1 pl-[3px]">
                  <span className="size-1 rounded-full border border-[#999]" />
                  <span className="whitespace-pre">Balance: 0.00 USD  Equity: 0.00  Free margin: 0.00</span>
                </span>
              </td>
              <td className="pr-[3px] text-right">0.00</td>
            </tr>
          </tbody>
        </table>
      </div>
      <div role="tablist" className="flex h-[12px] shrink-0 border-t border-[#666] text-[7px] leading-none text-[#8a8a8a]">
        {TERMINAL_TABS.map((t, i) => (
          <span key={t.name} className="flex">
            <button
              role="tab"
              aria-selected={i === 0}
              className={i === 0 ? '-mt-px border-r border-b border-l border-[#444] bg-white px-[5px] text-black' : 'flex items-center px-1'}
            >
              {t.name}
              {t.count && <sub className="pl-px text-[5px] font-bold text-[#f02020]">{t.count}</sub>}
            </button>
            {i > 0 && <span className="my-[2px] w-px bg-[#999]" />}
          </span>
        ))}
      </div>
    </div>
  </section>
);

const StatusBar = () => (
  <footer className="flex h-[7px] shrink-0 overflow-hidden border-t border-[#c4c4c4] pt-[2px] font-['Open_Sans',sans-serif] text-[6px] leading-[7px] whitespace-nowrap">
    <span className="flex-1 pl-px">For Help, press F1</span>
    {['Default', '2020.07.31 04:30', 'O: 1960.44', 'H: 1966.89', 'L: 1960.44', 'C: 1965.10', 'V: 5368'].map((s, i) => (
      <span key={s} className={`border-l border-[#ccc] pl-[3px] ${i === 0 ? 'w-[65px]' : i === 1 ? 'w-[56px]' : 'w-[39px]'}`}>{s}</span>
    ))}
    <span className="flex w-[79px] gap-[2px] border-l border-[#ccc] pl-[3px]">
      <span className="h-2 w-3 bg-[repeating-linear-gradient(90deg,#7a9a20_0_2px,#c4d860_2px_3px)]" />148/2 kb
    </span>
  </footer>
);

const TASKS: { name: string; open?: boolean; active?: boolean; icon: React.ReactNode }[] = [
  { name: 'Start', icon: <path d="M0 1.700l5-.7v4.600H0zM5.700.9L12 0v5.600H5.700zM0 6.300h5V11l-5-.7zM5.700 6.300H12V12l-6.300-.9z" fill="#fff" transform="translate(1.200 1.200) scale(.8)" /> },
  { name: 'Search', icon: <path d="M7.500 1.500a3 3 0 110 6 3 3 0 010-6zM5.300 6.700L1.500 10.500" stroke="#eee" /> },
  { name: 'File Explorer', open: true, icon: <><path d="M0 1h5l1 1h6v9H0z" fill="#f5d271" /><path d="M0 5h12v6H0z" fill="#fbe29a" /><path d="M2 7h8v4H8V9H4v2H2z" fill="#3fa0dc" /></> },
  { name: 'Remote', open: true, icon: <><path d="M0 1l7 1v5H0z" fill="#d7e6f2" /><path d="M1 2l5 1v3H1z" fill="#4b93d8" /><path d="M4 6l7-2v6l-7 1z" fill="#c9dcec" /><path d="M5 7l5-1.500V9L5 10z" fill="#2f78c8" /><path d="M8 0l3 1-2 3" fill="#e4eef5" /></> },
  { name: 'Snip', icon: <><ellipse cx="4" cy="4" rx="4" ry="3" fill="#c8b8bc" /><path d="M4 4l6 6M7 5l-1 5" stroke="#b8404c" strokeWidth="1.500" /><circle cx="10" cy="9" r="1.500" stroke="#6a87b0" /></> },
  { name: 'Teams', icon: <><rect width="12" height="12" rx="1" fill="#f8f8f8" /><circle cx="6" cy="6.500" r="2" stroke="#3a6db0" strokeWidth="1.500" /><circle cx="8" cy="4" r="1" fill="#e89030" /></> },
  { name: 'Chrome', icon: <><circle cx="6" cy="6" r="5.500" fill="#e33b2e" /><path d="M6 6L1.200 3.200A5.500 5.500 0 006 11.500z" fill="#2fa24c" /><path d="M6 6h5.500A5.500 5.500 0 016 11.500z" fill="#fbc116" /><circle cx="6" cy="6" r="2.800" fill="#fff" /><circle cx="6" cy="6" r="2.200" fill="#3f7de8" /></> },
  { name: 'Coc Coc', open: true, icon: <><circle cx="6" cy="6.500" r="5.500" fill="#5cae4a" /><circle cx="6" cy="7" r="2.200" stroke="#fff" strokeWidth="1.400" /><path d="M7 0l1 4 2-1 2-2" fill="#f0e6b0" /></> },
  { name: 'Firefox', icon: <><circle cx="6" cy="6.500" r="5" fill="#f4632a" /><path d="M1 6c0-3 2-3 3-4 2 2 4-1 5 1s2 2 2 4" fill="#fdb52c" /><circle cx="6" cy="7" r="2.200" fill="#8a3fc4" /></> },
  { name: 'Zalo', open: true, icon: <><rect width="12" height="12" rx="5" fill="#f4f9ff" /><path d="M2 4.500h2L2 7.500h2M5.500 5.500v2h1v-2zM8 4v3.500M9.300 5.500v2h1v-2z" stroke="#1d6fe0" strokeWidth=".8" /></> },
  { name: 'PrimusMarkets', open: true, active: true, icon: <><path d="M0 10l3-7h9l-3 7z" fill="#1a4480" /><path d="M1 9l4-3 5-1-4 4z" fill="#f0f0f0" /><path d="M6 9l5-5-1 4z" fill="#f09a2c" /></> },
  { name: 'Photos', open: true, icon: <><path d="M0 1h12v10H0z" fill="#d8ecf8" /><path d="M1 2h10v6H1z" fill="#3c8cc8" /><path d="M1 8l3-3 3 2 4-1v2z" fill="#1c4c68" /></> },
  { name: 'Paint', open: true, icon: <><ellipse cx="6" cy="6.500" rx="5.500" ry="4.500" fill="#d8d4c8" /><circle cx="4" cy="5" r="1" fill="#d04030" /><circle cx="7" cy="4" r="1" fill="#30a050" /><circle cx="3" cy="8" r="1" fill="#3070d0" /><path d="M10 3L6 11" stroke="#c89030" strokeWidth="1.500" /></> },
];

const Taskbar = () => (
  <footer className="flex h-[23px] shrink-0 items-stretch border-t border-[#222] bg-[#030406] text-white">
    {TASKS.map((t) => (
      <button key={t.name} aria-label={t.name} className={`flex w-[27px] flex-col items-center justify-between pt-1 ${t.active ? 'bg-[#3a3f44]' : ''}`}>
        <Ico className="size-[13px]">{t.icon}</Ico>
        <span className={`h-px w-[22px] ${t.open ? 'bg-[#86e0b8]' : ''}`} />
      </button>
    ))}
    <div className="ml-auto flex items-center gap-1 pr-[13px] text-[7px] leading-none">
      <ChevronUp size={9} />
      <MonitorSmartphone size={9} />
      <CloudUpload size={9} fill="#fff" stroke="#fff" />
      <span className="relative"><Volume1 size={9} /><span className="absolute right-0 bottom-0 size-1 bg-[#f03c3c]" /></span>
      <Ico className="size-[9px]"><path d="M3 0l3 2-3 2-3-2zM9 0l3 2-3 2-3-2zM3 4l3 2-3 2-3-2zM9 4l3 2-3 2-3-2z" fill="#fff" /><circle cx="8.500" cy="9" r="3" fill="#e02838" /></Ico>
      <span>ENG</span>
      <span className="mx-1 flex flex-col items-center gap-[3px]"><span>5:45 PM</span><span>8/3/2020</span></span>
      <button aria-label="Notifications" className="relative">
        <MessageSquareText size={10} fill="#fff" stroke="#555" />
        <span className="absolute -right-[5px] -bottom-[3px] flex size-2 items-center justify-center rounded-full border border-[#999] bg-[#222] text-[6px]">4</span>
      </button>
    </div>
  </footer>
);

const SideScroll = () => (
  <aside className="flex w-[10px] shrink-0 flex-col items-center bg-[#f4f5f7] text-[#555]">
    <span className="mt-[15px] flex size-2 items-center justify-center rounded-full bg-[#0a74d0] text-[6px] leading-none text-white">?</span>
    <ChevronUp size={7} className="mt-[55px]" />
    <span className="mt-px h-[360px] w-[8px] bg-[#cdcdcd]" />
    <ChevronDown size={7} className="mt-auto" />
    <span className="mt-[14px] mb-[2px] flex size-2 items-center justify-center rounded-full border border-[#999]"><Plus size={6} /></span>
  </aside>
);

export default function App() {
  return (
    <div className="flex h-screen flex-col overflow-hidden bg-white font-['Roboto','Noto_Sans',sans-serif] text-[#222]">
      <div className="flex min-h-0 flex-1">
        <main className="flex min-w-0 flex-1 flex-col border-t border-r border-l-[3px] border-[#a5e6ca] bg-[#f0f0f0] pl-px">
          <TitleBar />
          <MenuBar />
          <MainToolbar />
          <DrawToolbar />
          <div className="flex min-h-0 flex-1 border-t border-[#777]">
            <aside className="flex w-[166px] shrink-0 flex-col border-r border-[#bbb]">
              <MarketWatch />
              <Navigator />
            </aside>
            <div className="flex min-w-0 flex-1 flex-col pl-[2px]">
              <Chart />
              <ChartTabs />
            </div>
          </div>
          <Terminal />
          <StatusBar />
        </main>
        <SideScroll />
      </div>
      <Taskbar />
    </div>
  );
}
